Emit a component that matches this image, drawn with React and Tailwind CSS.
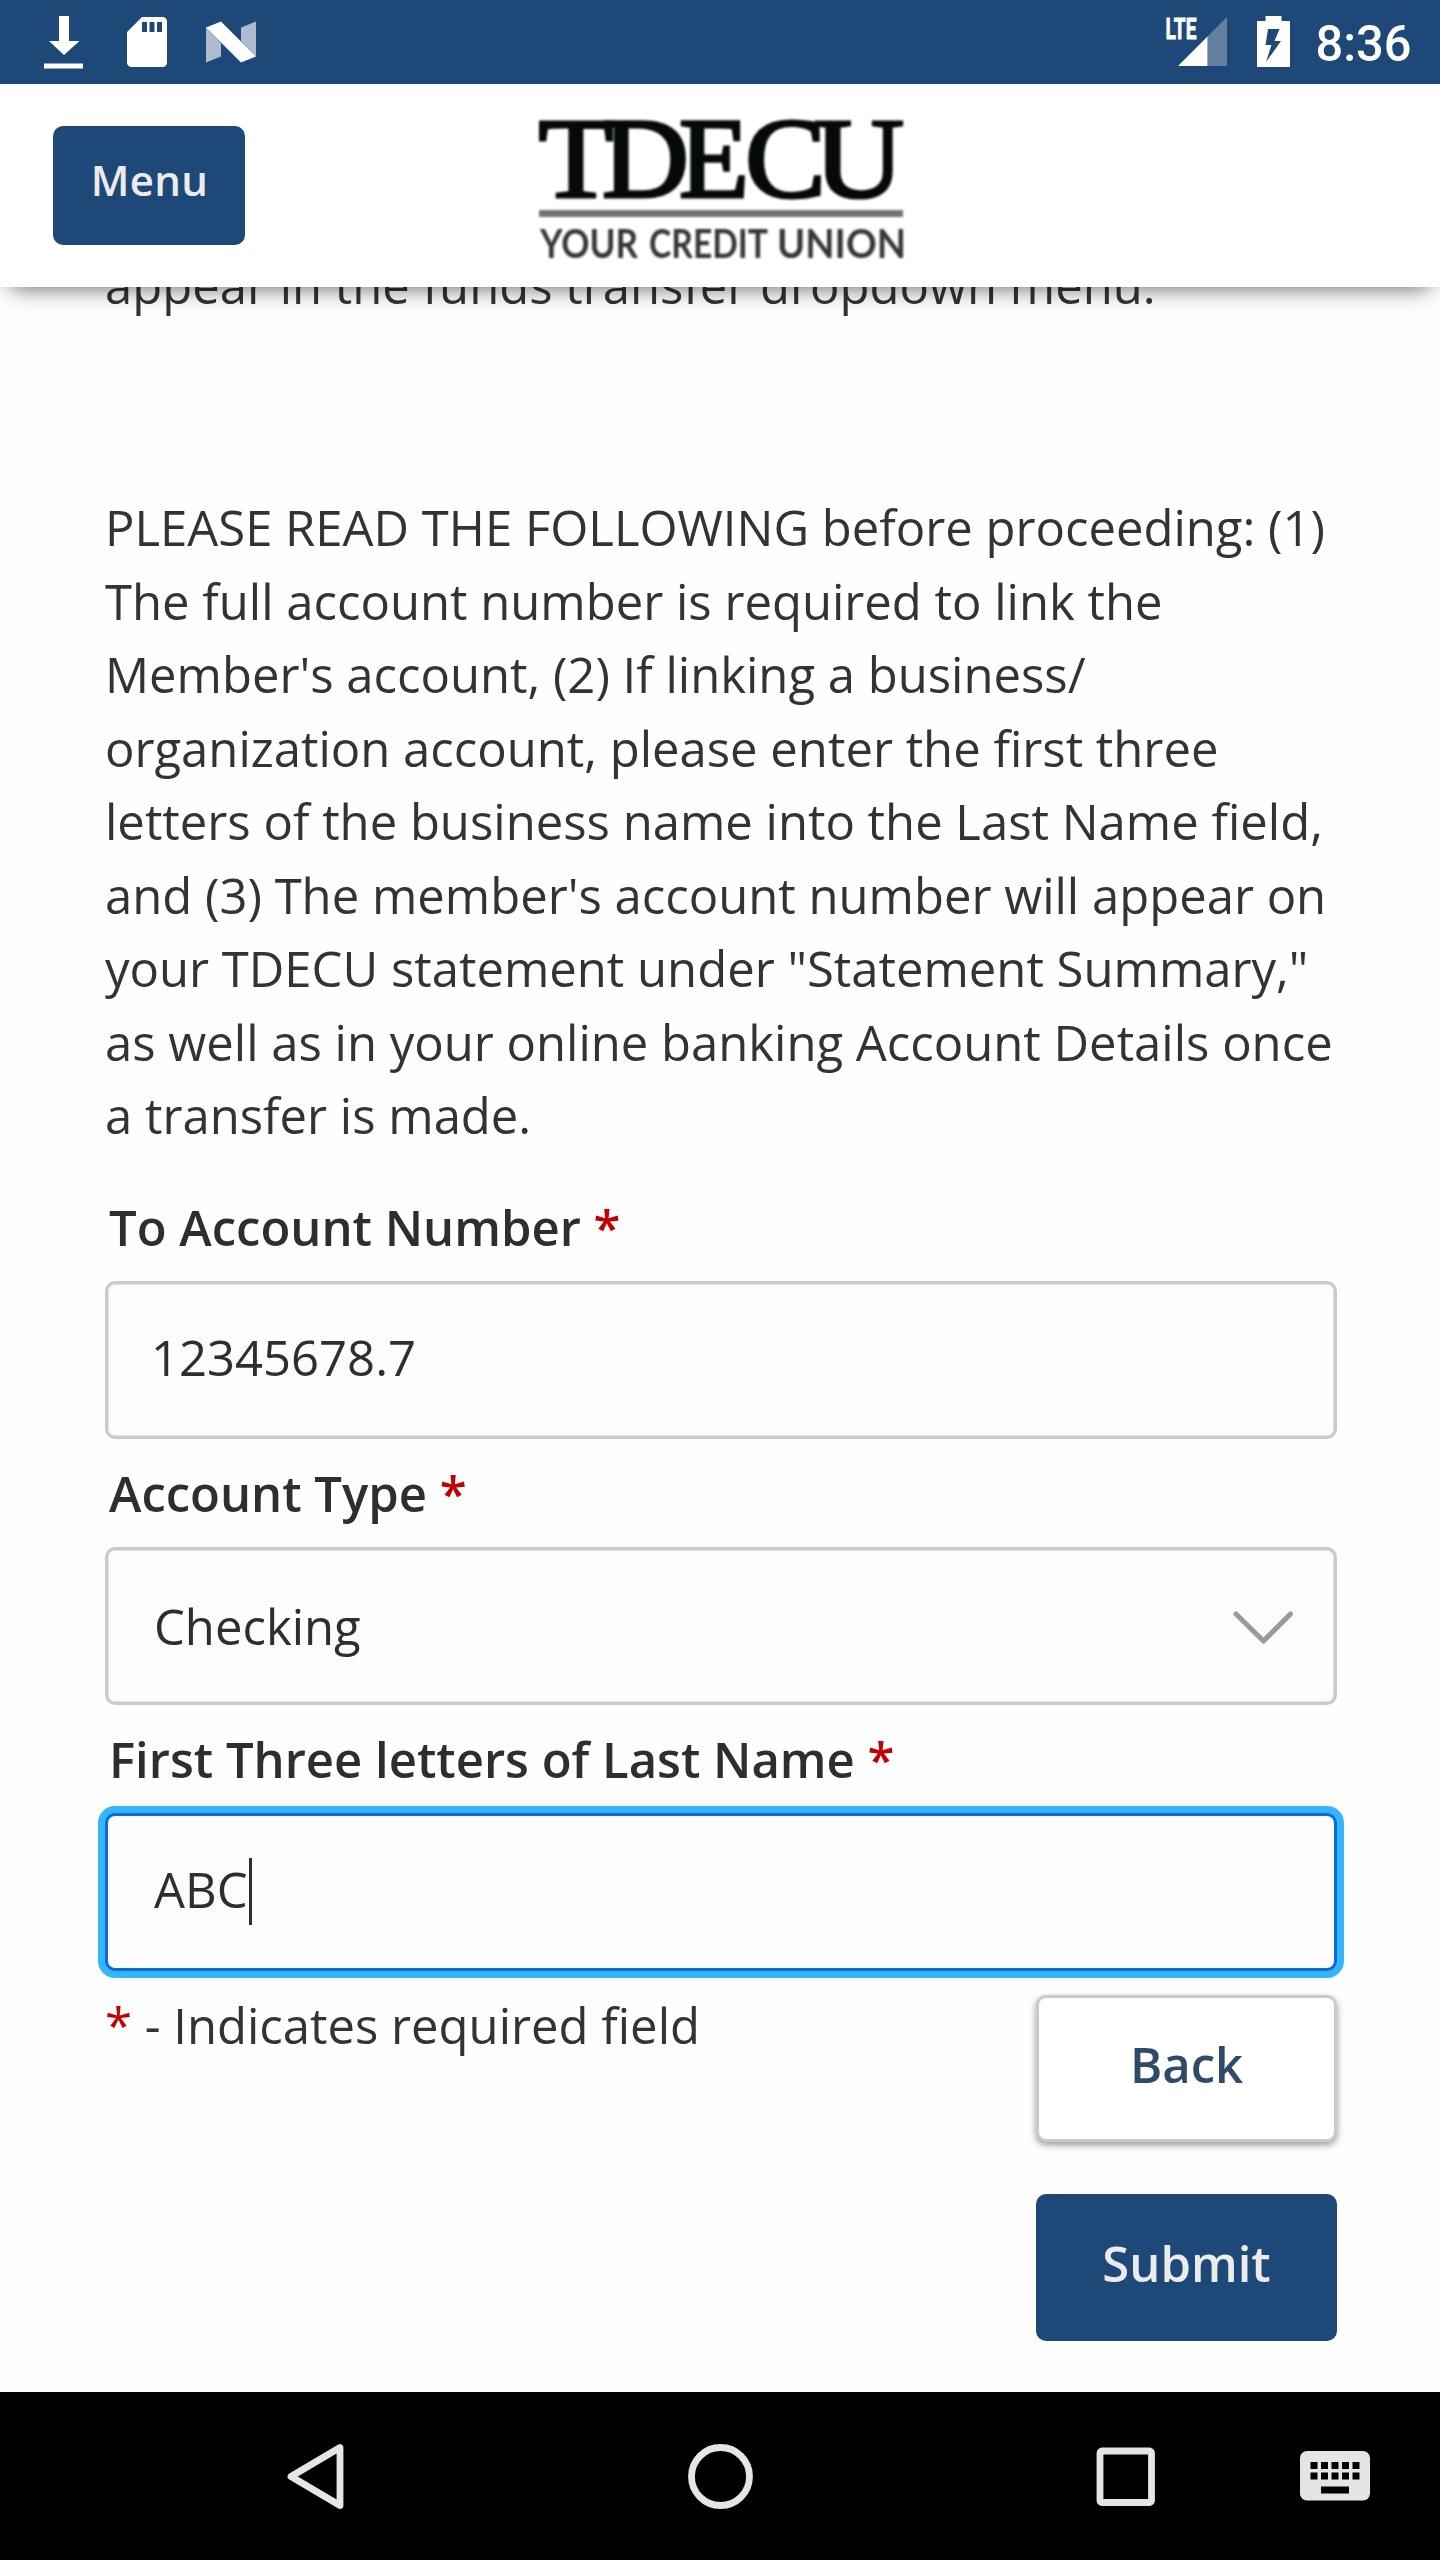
import React from "react";

const paragraph = [
  "PLEASE READ THE FOLLOWING before proceeding: (1)",
  "The full account number is required to link the",
  "Member's account, (2) If linking a business/",
  "organization account, please enter the first three",
  "letters of the business name into the Last Name field,",
  "and (3) The member's account number will appear on",
  "your TDECU statement under \"Statement Summary,\"",
  "as well as in your online banking Account Details once",
  "a transfer is made.",
];

function StatusBar() {
  return (
    <div className="relative z-20 flex h-[84px] shrink-0 items-center justify-between bg-[#1e4878]">
      <svg width="300" height="84" viewBox="0 0 300 84" fill="#fff">
        <path d="M59 16h10v25h10.500L64 55 49 41h10zM44 63.500h39v5H44z" />
        <path fillRule="evenodd" d="M142 17h20.500a4.500 4.500 0 0 1 4.500 4.500v41a4.500 4.500 0 0 1-4.500 4.500h-31a4.500 4.500 0 0 1-4.500-4.500V32zM142 22v10h5V22zm7.500 0v10h5V22zm7.500 0v10h5V22z" />
        <path d="M206 27.500l15 15.500v13.500l-15 6zM241 27.500l15-6v35L241 41z" fillOpacity=".63" />
        <path d="M206 27.500l15-6 35 35-15 6z" />
      </svg>
      <svg width="340" height="84" viewBox="1100 0 340 84" fill="#fff">
        <g transform="translate(1165.500 39) scale(0.640 1)">
          <text fontFamily="Roboto, sans-serif" fontWeight="700" fontSize="30" stroke="#fff" strokeWidth="0.800">LTE</text>
        </g>
        <path d="M1207.500 36.500 1227 17v49h-19.500z" fillOpacity=".31" />
        <path d="M1178 66l29.500-29.500V66z" />
        <path fillRule="evenodd" d="M1265.500 16h16v5h8.500v46h-33V21h8.500zM1268 29l-2.500 16h6l-5.500 17 15-21h-6.500l5-12z" />
        <text x="1315.500" y="61" fontFamily="Roboto, sans-serif" fontWeight="500" fontSize="49.500" textLength="96" lengthAdjust="spacingAndGlyphs">8:36</text>
      </svg>
    </div>
  );
}

function Logo() {
  return (
    <svg className="ml-[284px]" width="384" height="200" viewBox="529 85 384 200" style={{ filter: "blur(0.9px)" }}>
      <g fill="#050909" stroke="#050909" strokeWidth="3.200" fontFamily="'Liberation Serif', serif" fontSize="115">
        <text x="538.500" y="196.500" textLength="75" lengthAdjust="spacingAndGlyphs">T</text>
        <text x="602" y="196.500" textLength="87" lengthAdjust="spacingAndGlyphs">D</text>
        <text x="679" y="196.500" textLength="70" lengthAdjust="spacingAndGlyphs">E</text>
        <text x="745" y="196.500" textLength="81" lengthAdjust="spacingAndGlyphs">C</text>
        <text x="814" y="196.500" textLength="90" lengthAdjust="spacingAndGlyphs">U</text>
      </g>
      <rect x="539" y="210" width="364" height="7" fill="#6f7371" />
      <g fill="#333837" fontFamily="Lato, sans-serif" fontSize="40" fontWeight="700">
        <text x="540" y="257.500" textLength="98" lengthAdjust="spacingAndGlyphs">YOUR</text>
        <text x="649" y="257.500" textLength="119" lengthAdjust="spacingAndGlyphs">CREDIT</text>
        <text x="777" y="257.500" textLength="129" lengthAdjust="spacingAndGlyphs">UNION</text>
      </g>
    </svg>
  );
}

function Header() {
  return (
    <header className="relative z-10 flex h-[203px] shrink-0 items-start bg-white pl-[53px] shadow-[0_11px_21px_-10px_rgba(0,0,0,0.6)]">
      <button className="mt-[42px] flex h-[119px] w-[192px] justify-center rounded-[10px] bg-[#1e4878] pt-[25px] pl-px text-[42px] leading-[57px] font-semibold tracking-[0.300px] text-[#ebebeb]">
        Menu
      </button>
      <div className="mt-px"><Logo /></div>
    </header>
  );
}

function Label({ children }) {
  return (
    <label className="block h-[70px] pt-[3px] pl-[4px] text-[49px] leading-[67px] font-semibold whitespace-nowrap text-[#2e2e2e]">
      {children} <span className="text-[#c40000]">*</span>
    </label>
  );
}

const box = "mt-[20px] flex h-[158px] items-start rounded-[10px] border-[3px] bg-[#fcfcfc] text-[49px] leading-[67px] text-[#2e2e2e]";

export default function App() {
  return (
    <div className="flex h-[2560px] w-[1440px] flex-col overflow-hidden bg-[#fefefe] font-['Open_Sans',sans-serif]">
      <StatusBar />
      <Header />
      <main className="h-[2105px] shrink-0 pr-[103px] pl-[105px] text-[49px] leading-[73.500px] text-[#333]">
        <p className="-mt-[38px] whitespace-nowrap">appear in the funds transfer dropdown menu.</p>
        <p className="mt-[168.500px] whitespace-nowrap">
          {paragraph.map((line) => (
            <React.Fragment key={line}>{line}<br /></React.Fragment>
          ))}
        </p>
        <div className="mt-[38.500px]">
          <Label>To Account Number</Label>
          <div className={box + " border-[#cacaca] pt-[40px] pl-[43px] shadow-[inset_0_0_0_0.500px_#ccc]"}>12345678.7</div>
        </div>
        <div className="mt-[18px]">
          <Label>Account Type</Label>
          <div className={box + " justify-between border-[#cacaca] pt-[43px] pr-[40px] pl-[46px] shadow-[inset_0_0_0_0.500px_#ccc]"}>
            Checking
            <svg className="mt-[17px]" width="62" height="36" viewBox="0 0 62 36" fill="none" stroke="#999" strokeWidth="5" strokeLinecap="round" strokeLinejoin="round">
              <path d="M4 4 31.500 31 58.500 4" />
            </svg>
          </div>
        </div>
        <div className="mt-[18px]">
          <Label>First Three letters of Last Name</Label>
          <div className={box + " border-[#1069d8] pt-[40px] pl-[46px] shadow-[0_0_0_7px_#33b5ff]"}>
            ABC<span className="mt-[2px] ml-px h-[67px] w-[3px] bg-[#2e2e2e]" />
          </div>
        </div>
        <div className="mt-[17px] flex items-start justify-between">
          <p className="mt-px whitespace-nowrap"><span className="text-[#c40000]">*</span> - Indicates required field</p>
          <div className="mt-[7px] flex w-[301px] flex-col gap-[52px] font-semibold">
            <button className="h-[147px] rounded-[10px] border-[3px] border-[#cacaca] bg-white pb-[7px] text-[#304a6b] shadow-[0_3px_7px_rgba(0,0,0,0.4)]">Back</button>
            <button className="h-[147px] rounded-[10px] bg-[#1e4878] pb-[8px] text-[#ebebeb]">Submit</button>
          </div>
        </div>
      </main>
      <nav className="relative z-10 h-[168px] shrink-0 bg-black">
        <svg width="1440" height="168" viewBox="0 2392 1440 168" fill="none" stroke="#e5e5e5" strokeWidth="6.800">
          <path d="M291 2476.500 340 2447.500V2505.500z" strokeLinejoin="round" />
          <ellipse cx="720.500" cy="2476.500" rx="29" ry="29" />
          <rect x="1100" y="2451" width="51.500" height="51.500" rx="2" />
          <g stroke="none">
            <rect x="1300" y="2451" width="70" height="49.500" rx="7" fill="#e5e5e5" />
            <g fill="#000">
              {[0, 1, 2, 3, 4].map((i) => (
                <React.Fragment key={i}>
                  <rect x={1310.500 + i * 10.500} y="2462" width="7" height="7" />
                  <rect x={1310.500 + i * 10.500} y="2472.500" width="7" height="7" />
                </React.Fragment>
              ))}
              <rect x="1321" y="2486.500" width="28" height="7" />
            </g>
          </g>
        </svg>
      </nav>
    </div>
  );
}
